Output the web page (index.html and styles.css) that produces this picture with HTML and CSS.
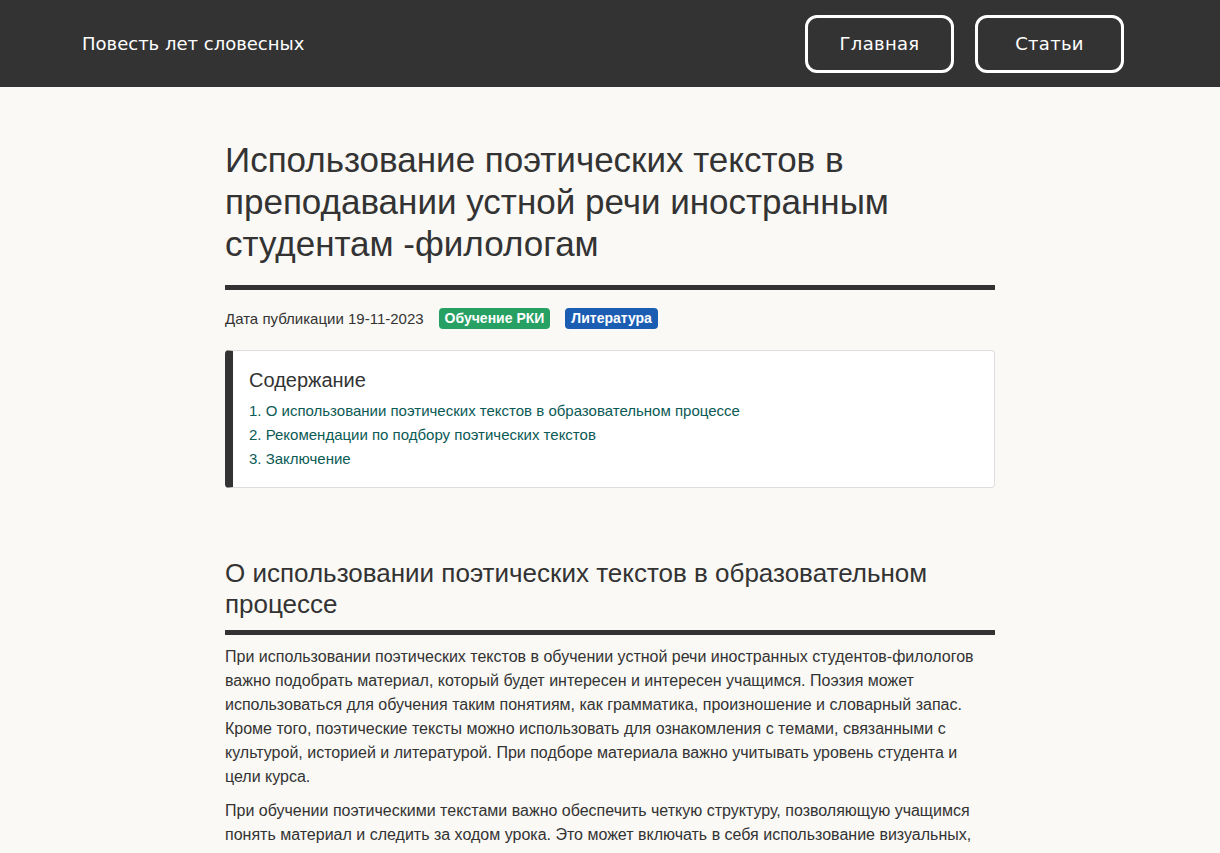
FILE: index.html
```html
<!DOCTYPE html>
<html lang="ru">
<head>
<meta charset="utf-8">
<title>Повесть лет словесных</title>
<link rel="stylesheet" href="styles.css">
</head>
<body>
<header class="site-header">
  <a class="brand" href="#">Повесть лет словесных</a>
  <nav class="nav">
    <a class="nav-btn" href="#">Главная</a>
    <a class="nav-btn" href="#">Статьи</a>
  </nav>
</header>
<main class="article">
  <h1 class="title">Использование поэтических текстов в преподавании устной речи иностранным студентам -филологам</h1>
  <div class="meta">
    <span class="date">Дата публикации 19-11-2023</span>
    <span class="badge badge-green">Обучение РКИ</span>
    <span class="badge badge-blue">Литература</span>
  </div>
  <div class="toc">
    <div class="toc-title">Содержание</div>
    <ol class="toc-list">
      <li><a href="#s1">1. О использовании поэтических текстов в образовательном процессе</a></li>
      <li><a href="#s2">2. Рекомендации по подбору поэтических текстов</a></li>
      <li><a href="#s3">3. Заключение</a></li>
    </ol>
  </div>
  <section id="s1" class="section">
    <h2 class="section-title">О использовании поэтических текстов в образовательном процессе</h2>
    <p>При использовании поэтических текстов в обучении устной речи иностранных студентов-филологов важно подобрать материал, который будет интересен и интересен учащимся. Поэзия может использоваться для обучения таким понятиям, как грамматика, произношение и словарный запас. Кроме того, поэтические тексты можно использовать для ознакомления с темами, связанными с культурой, историей и литературой. При подборе материала важно учитывать уровень студента и цели курса.</p>
    <p>При обучении поэтическими текстами важно обеспечить четкую структуру, позволяющую учащимся понять материал и следить за ходом урока. Это может включать в себя использование визуальных, аудиовизуальных средств и других вспомогательных материалов, которые помогают учащимся лучше понять тексты. Кроме того, важно поощрять обсуждение и анализ стихотворений.</p>
  </section>
</main>
</body>
</html>
```

FILE: styles.css
```css
* { box-sizing: border-box; }
html, body { margin: 0; padding: 0; }
body {
  background: #faf9f5;
  color: #333;
  font-family: "Liberation Sans", Arial, sans-serif;
}
.site-header {
  background: #333;
  height: 87px;
  display: flex;
  align-items: center;
  justify-content: space-between;
  padding: 0 96px 0 82px;
}
.brand {
  color: #fff;
  text-decoration: none;
  font-family: "DejaVu Sans", sans-serif;
  font-size: 18px;
}
.nav { display: flex; gap: 21px; }
.nav-btn {
  display: flex;
  align-items: center;
  justify-content: center;
  width: 149px;
  height: 58px;
  border: 3px solid #fff;
  border-radius: 12px;
  color: #fff;
  text-decoration: none;
  font-family: "DejaVu Sans", sans-serif;
  font-size: 18px;
  letter-spacing: 0.3px;
}
.article {
  width: 770px;
  margin: 0 auto;
  padding-top: 52px;
}
.title {
  font-size: 35px;
  font-weight: normal;
  line-height: 42px;
  margin: 0;
  padding-bottom: 20px;
  border-bottom: 5px solid #333;
}
.meta {
  display: flex;
  align-items: center;
  gap: 15px;
  margin-top: 18px;
  font-size: 15px;
}
.badge {
  color: #fff;
  font-weight: bold;
  font-size: 14px;
  padding: 2px 6px;
  border-radius: 4px;
  line-height: 17px;
}
.badge-green { background: #27a064; }
.badge-blue { background: #1c5db4; }
.toc {
  margin-top: 21px;
  background: #fff;
  border: 1px solid #ddd;
  border-left: 8px solid #333;
  border-radius: 4px;
  padding: 16px 16px 16px 16px;
}
.toc-title {
  font-size: 20px;
  line-height: 26px;
  margin-bottom: 6px;
}
.toc-list {
  list-style: none;
  margin: 0;
  padding: 0;
}
.toc-list li { font-size: 15px; line-height: 24px; }
.toc-list a { color: #0b5a55; text-decoration: none; }
.section { margin-top: 70px; }
.section-title {
  font-size: 26px;
  font-weight: normal;
  line-height: 31px;
  margin: 0;
  padding-bottom: 10px;
  border-bottom: 5px solid #333;
}
.section p {
  font-size: 16px;
  line-height: 24px;
  margin: 10px 0 10px;
}
```
